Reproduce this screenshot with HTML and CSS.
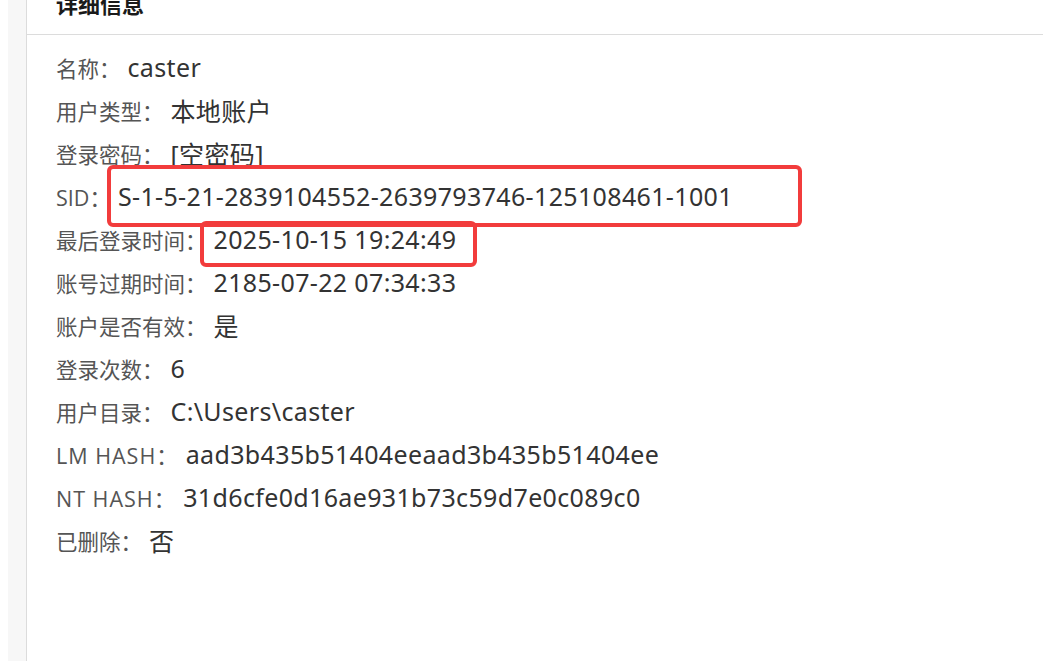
FILE: index.html
```html
<!DOCTYPE html>
<html lang="zh-CN">
<head>
<meta charset="utf-8">
<title>详细信息</title>
<link rel="stylesheet" href="styles.css">
</head>
<body>
<div class="gutter"></div>
<div class="sidebar"></div>
<main class="panel">
  <header class="panel-head">
    <h2 class="panel-title">详细信息</h2>
  </header>
  <div class="details">
    <div class="row"><span class="label">名称：</span><span class="value">caster</span></div>
    <div class="row"><span class="label">用户类型：</span><span class="value">本地账户</span></div>
    <div class="row"><span class="label">登录密码：</span><span class="value">[空密码]</span></div>
    <div class="row"><span class="label">SID：</span><span class="value">S-1-5-21-2839104552-2639793746-125108461-1001</span></div>
    <div class="row"><span class="label">最后登录时间：</span><span class="value">2025-10-15 19:24:49</span></div>
    <div class="row"><span class="label">账号过期时间：</span><span class="value">2185-07-22 07:34:33</span></div>
    <div class="row"><span class="label">账户是否有效：</span><span class="value">是</span></div>
    <div class="row"><span class="label">登录次数：</span><span class="value">6</span></div>
    <div class="row"><span class="label">用户目录：</span><span class="value">C:\Users\caster</span></div>
    <div class="row"><span class="label label-en">LM HASH：</span><span class="value">aad3b435b51404eeaad3b435b51404ee</span></div>
    <div class="row"><span class="label label-en">NT HASH：</span><span class="value">31d6cfe0d16ae931b73c59d7e0c089c0</span></div>
    <div class="row"><span class="label">已删除：</span><span class="value">否</span></div>
    <div class="mark mark-sid"></div>
    <div class="mark mark-login"></div>
  </div>
</main>
</body>
</html>
```
FILE: styles.css
```css
html, body {
  margin: 0;
  padding: 0;
  background: #ffffff;
}
body {
  display: flex;
  height: 661px;
  overflow: hidden;
  font-family: "Noto Sans", "Noto Sans CJK SC", sans-serif;
}
.gutter {
  width: 8px;
  flex: none;
  background: #ffffff;
}
.sidebar {
  width: 18px;
  flex: none;
  background: #f7f7f7;
  border-right: 1px solid #dcdcdc;
}
.panel {
  flex: 1;
  display: flex;
  flex-direction: column;
}
.panel-head {
  height: 34px;
  border-bottom: 1px solid #dcdcdc;
  padding-left: 29px;
  overflow: hidden;
}
.panel-title {
  margin: -10px 0 0 0;
  font-family: "Noto Sans CJK SC", sans-serif;
  font-size: 22px;
  line-height: 26px;
  font-weight: 700;
  color: #1a1a1a;
}
.details {
  position: relative;
  padding: 10px 0 0 29px;
  display: flex;
  flex-direction: column;
}
.row {
  height: 43px;
  display: flex;
  align-items: center;
  white-space: nowrap;
}
.label {
  font-family: "Open Sans", "Noto Sans CJK SC", sans-serif;
  font-size: 21.5px;
  color: #555;
  margin-top: 2px;
}
.label-en {
  letter-spacing: 1px;
}
.value {
  font-family: "Noto Sans", "Noto Sans CJK SC", sans-serif;
  font-size: 25px;
  letter-spacing: 0.35px;
  color: #333;
  margin-left: 7px;
}
.mark {
  position: absolute;
  border: 4px solid #f23c3c;
  border-radius: 6px;
  box-sizing: border-box;
}
.mark-sid {
  left: 80px;
  top: 130px;
  width: 695px;
  height: 62px;
}
.mark-login {
  left: 173px;
  top: 186px;
  width: 277px;
  height: 46px;
}
```
